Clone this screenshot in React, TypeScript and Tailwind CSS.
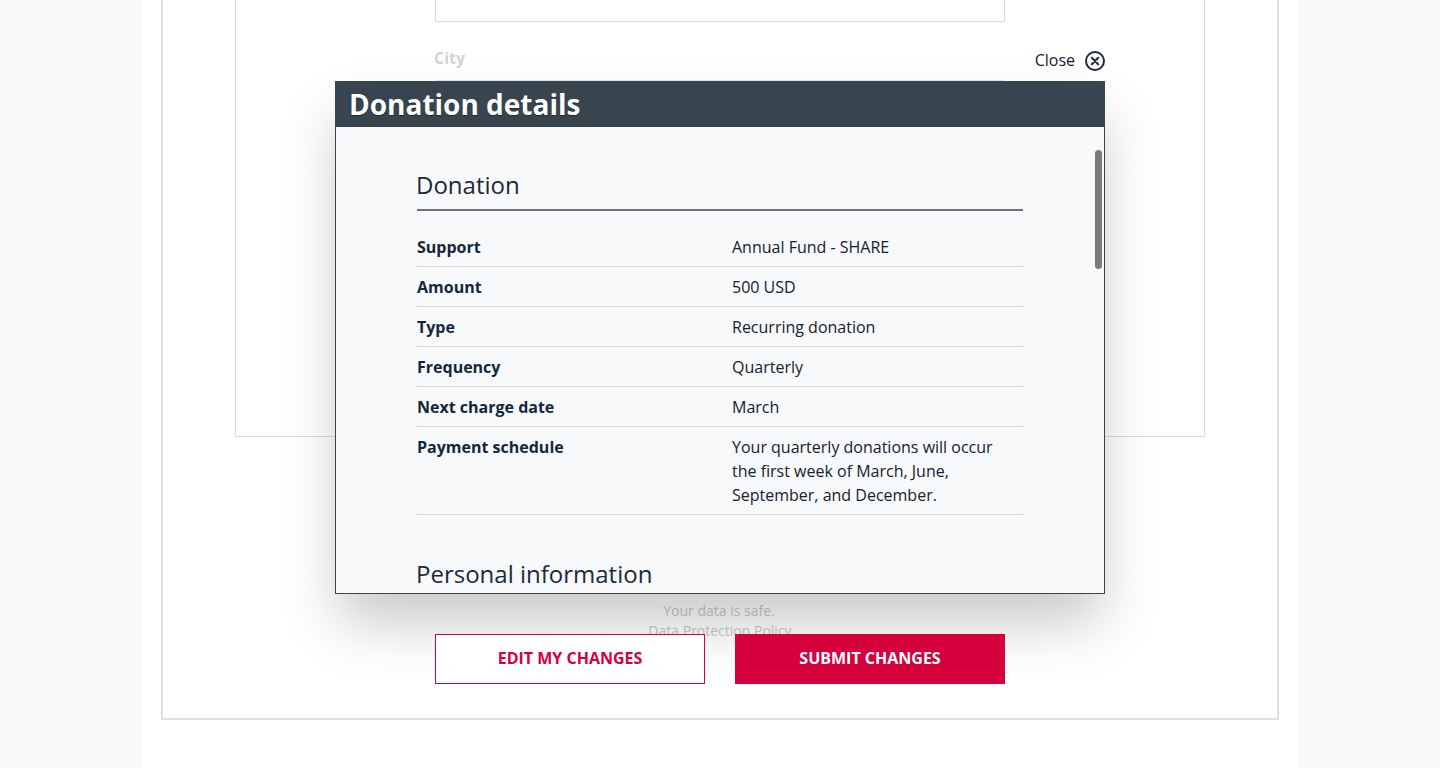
const rows = [
  { label: "Support", value: "Annual Fund - SHARE" },
  { label: "Amount", value: "500 USD" },
  { label: "Type", value: "Recurring donation" },
  { label: "Frequency", value: "Quarterly" },
  { label: "Next charge date", value: "March" },
  {
    label: "Payment schedule",
    value: "Your quarterly donations will occur the first week of March, June, September, and December.",
  },
]

function CloseIcon() {
  return (
    <svg width="20" height="20" viewBox="0 0 20 20" fill="none" stroke="#1b2a36" strokeWidth="2">
      <circle cx="10" cy="10" r="9" />
      <path d="M6.8 6.8l6.4 6.4M13.2 6.8l-6.4 6.4" strokeLinecap="round" />
    </svg>
  )
}

export default function App() {
  return (
    <div className="relative h-[768px] overflow-hidden bg-[#f8f9fb] font-['Open_Sans',sans-serif] text-base text-[#13222e]">
      {/* page behind the dialog */}
      <div className="mx-auto h-full w-[1158px] bg-white px-5">
        <div className="h-[720px] border-x-2 border-b-2 border-[#dedfe0] px-[72px]">
          <div className="h-[437px] border-x border-b border-[#d8dadc] px-[199px]">
            <div className="h-[22px] border-x border-b border-[#d8dadc]" />
            <div className="-ml-px mt-6 h-[34px] font-bold leading-6 text-[#cfd4da]">City</div>
            <div className="h-8 border-x border-t border-[#e4e6e8]" />
          </div>
          <div className="mt-[164px] h-[33px] text-center text-sm leading-5 text-[#c9cbcd]">
            <p className="-ml-0.5">Your data is safe.</p>
            <p>Data Protection Policy</p>
          </div>
          <div className="relative z-20 flex justify-center gap-[30px]">
            <button className="h-[50px] w-[270px] border border-[#d6003d] bg-white pb-0.5 font-bold text-[#d6003d]">
              EDIT MY CHANGES
            </button>
            <button className="h-[50px] w-[270px] bg-[#d6003d] pb-0.5 font-bold text-white">SUBMIT CHANGES</button>
          </div>
        </div>
      </div>

      {/* dialog */}
      <div className="absolute inset-x-0 top-[48px] z-10 flex flex-col items-center">
        <div className="flex h-[33px] w-[770px] items-start justify-end gap-[10px]">
          <span className="leading-6">Close</span>
          <span className="mt-[3px]">
            <CloseIcon />
          </span>
        </div>
        <div className="relative h-[513px] w-[770px] border border-[#38454e] bg-[#f8f9fb] shadow-[0_32px_54px_-4px_rgba(0,0,0,0.22)]">
          <div className="h-[45px] bg-[#38454e] pl-[13px] text-[28px] font-bold leading-[44px] text-white [text-shadow:0_1px_1px_rgba(0,0,0,0.4)]">
            Donation details
          </div>
          <div className="h-[466px] overflow-hidden pl-[80px] pr-[81px] pt-10">
            <h2 className="h-[42px] text-2xl leading-9 text-[#1b2a36]">Donation</h2>
            <div className="ml-px border-t-2 border-[#6d7378] pt-4">
              {rows.map((row) => (
                <div key={row.label} className="flex border-b border-[#d6d9dc] pb-[7px] pt-2 leading-6">
                  <div className="w-[315px] shrink-0 font-bold text-[#12283a]">{row.label}</div>
                  <div className="w-[270px]">{row.value}</div>
                </div>
              ))}
            </div>
            <h2 className="mt-[41px] text-2xl leading-9 text-[#1b2a36]">Personal information</h2>
          </div>
          <div className="absolute right-[2px] top-[68px] h-[119px] w-[7px] rounded-full bg-[#7d7d78]" />
        </div>
      </div>
    </div>
  )
}
